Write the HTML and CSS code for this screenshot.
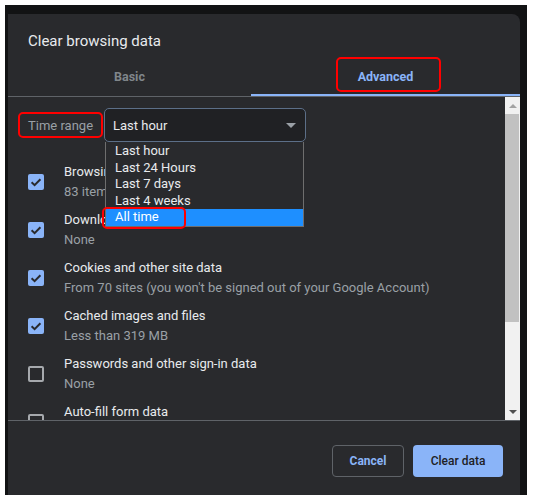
FILE: index.html
```html
<!DOCTYPE html>
<html>
<head>
<meta charset="utf-8">
<link rel="stylesheet" href="styles.css">
</head>
<body>
<div class="screen">
  <div class="dialog">
    <h1 class="title">Clear browsing data</h1>
    <div class="tabs">
      <div class="tab tab-basic">Basic</div>
      <div class="tab tab-advanced">Advanced</div>
    </div>
    <div class="body">
      <div class="scroll">
        <div class="range-row">
          <span class="range-label">Time range</span>
          <div class="select"><span>Last hour</span><span class="caret"></span></div>
        </div>
        <div class="item">
          <span class="cb checked"><svg viewBox="0 0 16 16" width="16" height="16"><path d="M3.6 8.3 L6.6 11.2 L12.4 5.2" fill="none" stroke="#292a2d" stroke-width="2"/></svg></span>
          <div class="text"><div class="t1">Browsing history</div><div class="t2">83 items</div></div>
        </div>
        <div class="item">
          <span class="cb checked"><svg viewBox="0 0 16 16" width="16" height="16"><path d="M3.6 8.3 L6.6 11.2 L12.4 5.2" fill="none" stroke="#292a2d" stroke-width="2"/></svg></span>
          <div class="text"><div class="t1">Downloads</div><div class="t2">None</div></div>
        </div>
        <div class="item">
          <span class="cb checked"><svg viewBox="0 0 16 16" width="16" height="16"><path d="M3.6 8.3 L6.6 11.2 L12.4 5.2" fill="none" stroke="#292a2d" stroke-width="2"/></svg></span>
          <div class="text"><div class="t1">Cookies and other site data</div><div class="t2">From 70 sites (you won't be signed out of your Google Account)</div></div>
        </div>
        <div class="item">
          <span class="cb checked"><svg viewBox="0 0 16 16" width="16" height="16"><path d="M3.6 8.3 L6.6 11.2 L12.4 5.2" fill="none" stroke="#292a2d" stroke-width="2"/></svg></span>
          <div class="text"><div class="t1">Cached images and files</div><div class="t2">Less than 319 MB</div></div>
        </div>
        <div class="item">
          <span class="cb"></span>
          <div class="text"><div class="t1">Passwords and other sign-in data</div><div class="t2">None</div></div>
        </div>
        <div class="item">
          <span class="cb"></span>
          <div class="text"><div class="t1">Auto-fill form data</div><div class="t2">None</div></div>
        </div>
      </div>
      <div class="scrollbar">
        <div class="sb-btn"><span class="sb-up"></span></div>
        <div class="sb-thumb"></div>
        <div class="sb-rest"></div>
        <div class="sb-btn"><span class="sb-down"></span></div>
      </div>
    </div>
    <div class="footer">
      <button class="btn btn-cancel">Cancel</button>
      <button class="btn btn-clear">Clear data</button>
    </div>

    <ul class="dropdown">
      <li>Last hour</li>
      <li>Last 24 Hours</li>
      <li>Last 7 days</li>
      <li>Last 4 weeks</li>
      <li class="active">All time</li>
    </ul>

    <div class="mark mark-advanced"></div>
    <div class="mark mark-range"></div>
    <div class="mark mark-all"></div>
  </div>
</div>
</body>
</html>
```

FILE: styles.css
```css
* { box-sizing: border-box; }
html, body { margin: 0; padding: 0; background: #ffffff; }
body { font-family: Roboto, "Liberation Sans", Arial, sans-serif; }

.screen {
  margin: 5px 0 0 5px;
  width: 522px;
  height: 490px;
  background: #121314;
  overflow: hidden;
  padding: 9px 0 0 3px;
}

.dialog {
  position: relative;
  width: 512px;
  height: 500px;
  background: #292a2d;
  border-radius: 0 8px 0 0;
  display: flex;
  flex-direction: column;
}

.title {
  margin: 0;
  padding: 17px 20px 6px 20px;
  font-size: 15px;
  line-height: 20px;
  font-weight: 400;
  color: #e8eaed;
}

.tabs {
  display: flex;
  height: 40px;
  border-bottom: 1px solid #5f6368;
}
.tab {
  display: flex;
  align-items: center;
  justify-content: center;
  font-size: 12.5px;
  font-weight: 700;
  padding-bottom: 0;
}
.tab-basic { width: 243px; color: #80868b; }
.tab-advanced { width: 269px; color: #8ab4f8; box-shadow: inset 0 -2px 0 #8ab4f8; }

.body {
  display: flex;
  height: 323px;
}
.scroll {
  flex: 1;
  overflow: hidden;
}

.range-row {
  display: flex;
  align-items: center;
  gap: 12px;
  padding: 11px 0 0 20px;
}
.range-label {
  font-size: 13px;
  color: #9aa0a6;
  width: 64px;
  flex: none;
  white-space: nowrap;
}
.select {
  width: 202px;
  height: 34px;
  border: 1px solid #5c6f88;
  border-radius: 5px;
  background: #202124;
  display: flex;
  align-items: center;
  justify-content: space-between;
  padding: 0 9px 0 8px;
  font-size: 13px;
  color: #e8eaed;
}
.caret {
  width: 0;
  height: 0;
  border-left: 5px solid transparent;
  border-right: 5px solid transparent;
  border-top: 5px solid #9aa0a6;
}

.item {
  display: flex;
  align-items: center;
  gap: 20px;
  padding: 4px 0 4px 20px;
}
.range-row + .item { margin-top: 16px; }
.cb {
  width: 16px;
  height: 16px;
  border: 2px solid #a6a9ad;
  border-radius: 2px;
  flex: none;
  display: flex;
}
.cb.checked {
  border: none;
  background: #8ab4f8;
}
.text { font-size: 13px; line-height: 20px; white-space: nowrap; }
.t1 { color: #e8eaed; }
.t2 { color: #9aa0a6; }

.scrollbar {
  width: 15px;
  background: #f1f1f1;
  display: flex;
  flex-direction: column;
}
.sb-btn {
  height: 17px;
  display: flex;
  align-items: center;
  justify-content: center;
}
.sb-up {
  width: 0; height: 0;
  border-left: 4px solid transparent;
  border-right: 4px solid transparent;
  border-bottom: 4px solid #a3a3a3;
}
.sb-down {
  width: 0; height: 0;
  border-left: 4px solid transparent;
  border-right: 4px solid transparent;
  border-top: 4px solid #505050;
}
.sb-thumb {
  height: 208px;
  margin: 0 1px 0 0;
  background: #c1c1c1;
}
.sb-rest { flex: 1; }

.footer {
  border-top: 1px solid #5f6368;
  display: flex;
  justify-content: flex-end;
  gap: 9px;
  padding: 24px 17px 0 0;
}
.btn {
  height: 32px;
  border-radius: 4px;
  font-family: Roboto, "Liberation Sans", Arial, sans-serif;
  font-size: 12px;
  font-weight: 700;
  cursor: pointer;
}
.btn-cancel {
  width: 72px;
  background: transparent;
  border: 1px solid #5f6368;
  color: #8ab4f8;
}
.btn-clear {
  width: 90px;
  background: #8ab4f8;
  border: none;
  color: #202124;
  font-weight: 500;
}

.dropdown {
  position: absolute;
  left: 97px;
  top: 128px;
  width: 199px;
  margin: 0;
  padding: 1px 0 0 0;
  list-style: none;
  background: #292a2d;
  border: 1px solid #6e6e6e;
  border-top: none;
}
.dropdown li {
  font-size: 13px;
  line-height: 16.5px;
  height: 16.5px;
  padding-left: 9px;
  color: #e8eaed;
}
.dropdown li.active {
  background: #1e8fff;
  color: #ffffff;
}

.mark {
  position: absolute;
  border: 2.5px solid #ff0000;
  border-radius: 5px;
}
.mark-advanced { left: 328px; top: 43px; width: 105px; height: 35px; }
.mark-range { left: 10px; top: 98px; width: 85px; height: 26px; }
.mark-all { left: 94px; top: 193px; width: 84px; height: 22px; }
```
